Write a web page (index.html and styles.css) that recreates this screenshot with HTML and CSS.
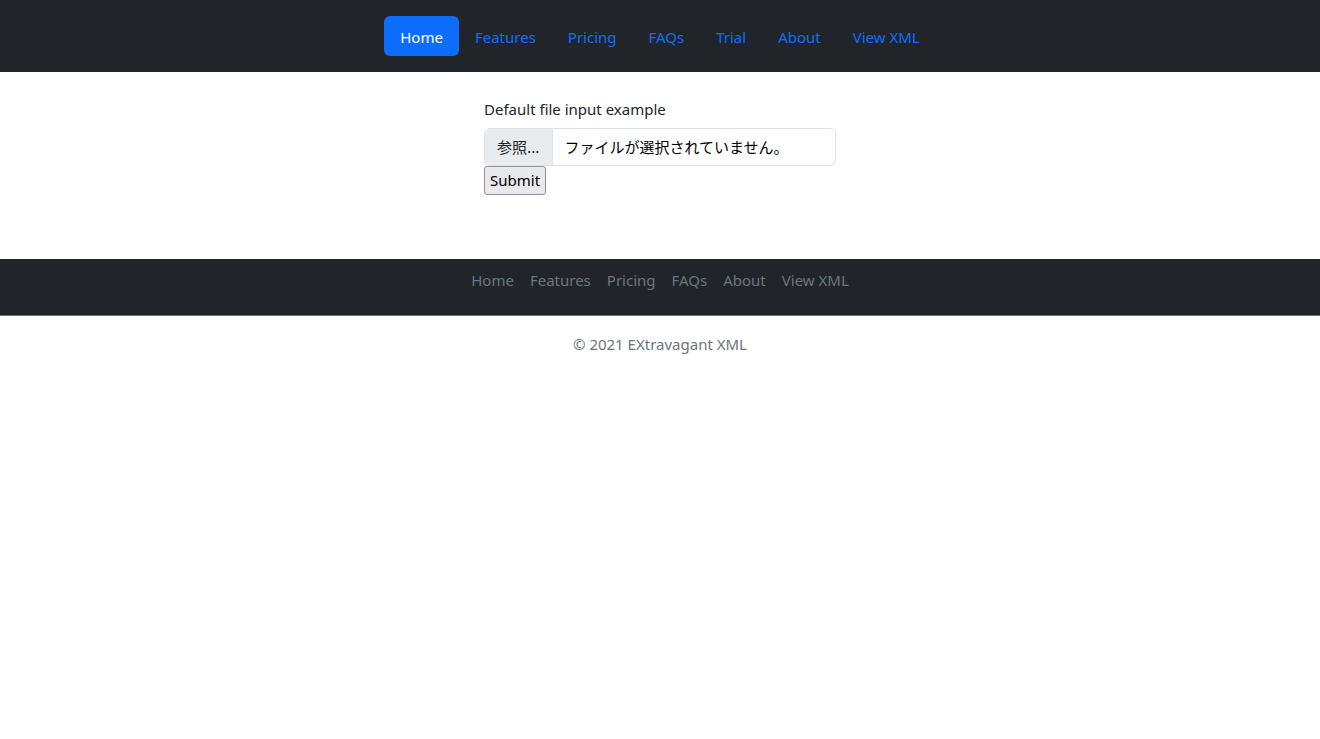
FILE: index.html
```html
<!DOCTYPE html>
<html lang="ja">
<head>
<meta charset="utf-8">
<title>EXtravagant XML</title>
<link rel="stylesheet" href="styles.css">
</head>
<body>
<header class="site-header">
  <ul class="nav-pills">
    <li><a href="#" class="nav-link active">Home</a></li>
    <li><a href="#" class="nav-link">Features</a></li>
    <li><a href="#" class="nav-link">Pricing</a></li>
    <li><a href="#" class="nav-link">FAQs</a></li>
    <li><a href="#" class="nav-link">Trial</a></li>
    <li><a href="#" class="nav-link">About</a></li>
    <li><a href="#" class="nav-link">View XML</a></li>
  </ul>
</header>
<main class="main">
  <form class="upload-form">
    <label class="form-label" for="formFile">Default file input example</label>
    <div class="file-input">
      <span class="file-btn">参照...</span>
      <span class="file-name">ファイルが選択されていません。</span>
    </div>
    <button type="button" class="submit-btn">Submit</button>
  </form>
</main>
<footer class="site-footer">
  <div class="footer-band">
    <ul class="footer-nav">
      <li><a href="#" class="footer-link">Home</a></li>
      <li><a href="#" class="footer-link">Features</a></li>
      <li><a href="#" class="footer-link">Pricing</a></li>
      <li><a href="#" class="footer-link">FAQs</a></li>
      <li><a href="#" class="footer-link">About</a></li>
      <li><a href="#" class="footer-link">View XML</a></li>
    </ul>
  </div>
  <p class="copyright">© 2021 EXtravagant XML</p>
</footer>
</body>
</html>
```

FILE: styles.css
```css
* { box-sizing: border-box; }
html, body { margin: 0; padding: 0; }
body {
  font-family: "Noto Sans", "Noto Sans CJK JP", sans-serif;
  font-size: 15px;
  line-height: 24px;
  color: #212529;
  background: #fff;
}
ul { list-style: none; margin: 0; padding: 0; }
a { text-decoration: none; }

.site-header {
  background: #212529;
  padding: 16px 0;
}
.nav-pills {
  display: flex;
  justify-content: center;
}
.nav-link {
  display: block;
  padding: 9px 16px 7px;
  color: #0d6efd;
  border-radius: 6px;
  font-size: 15px;
}
.nav-link.active {
  background: #0d6efd;
  color: #fff;
}

.main {
  display: flex;
  justify-content: center;
  padding: 25px 0 64px;
}
.upload-form {
  width: 352px;
  display: flex;
  flex-direction: column;
  align-items: flex-start;
}
.form-label {
  margin-bottom: 7px;
}
.file-input {
  width: 100%;
  height: 38px;
  display: flex;
  border: 1px solid #dee2e6;
  border-radius: 6px;
  overflow: hidden;
  font-family: "Noto Sans CJK JP", "Noto Sans", sans-serif;
}
.file-btn {
  background: #e9ecef;
  border-right: 1px solid #dee2e6;
  padding: 6px 12px;
  color: #212529;
  font-size: 15px;
  line-height: 24px;
}
.file-name {
  padding: 6px 12px;
  color: #000;
  font-size: 15px;
  line-height: 24px;
}
.submit-btn {
  font-family: "Noto Sans", sans-serif;
  font-size: 15px;
  line-height: 21px;
  padding: 3px 5px;
  background: #e9e9ed;
  border: 1px solid #8f8f9d;
  border-radius: 3px;
  color: #000;
}

.footer-band {
  background: #212529;
  padding-bottom: 16px;
  border-bottom: 1px solid #6c757d;
}
.footer-nav {
  display: flex;
  justify-content: center;
}
.footer-link {
  display: block;
  padding: 9px 8px 7px;
  color: #6c757d;
  font-size: 15px;
}
.copyright {
  margin: 16px 0 0;
  text-align: center;
  color: #6c757d;
}
```
